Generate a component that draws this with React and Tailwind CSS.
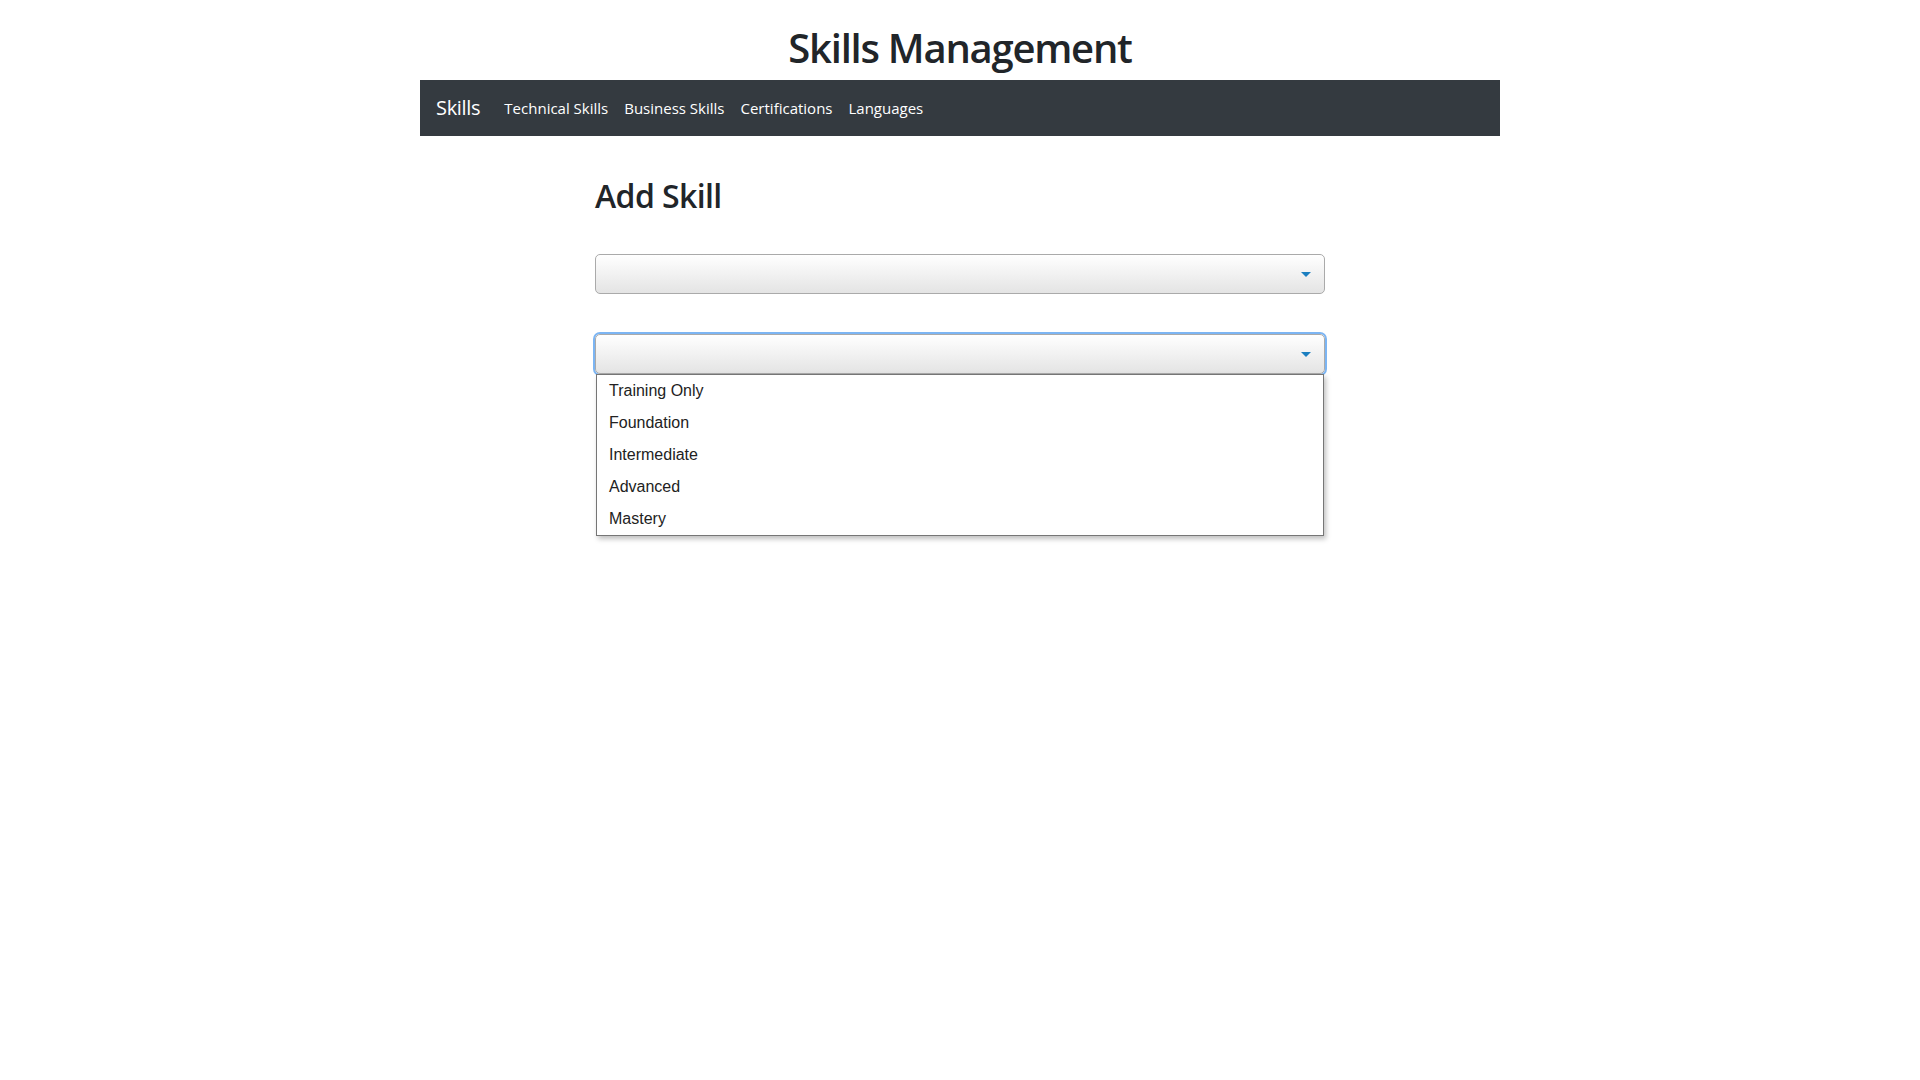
import React from 'react';

const links = ['Technical Skills', 'Business Skills', 'Certifications', 'Languages'];
const levels = ['Training Only', 'Foundation', 'Intermediate', 'Advanced', 'Mastery'];

function Arrow() {
  return (
    <svg width="10" height="5" viewBox="0 0 10 5" className="shrink-0">
      <path d="M0 0 H10 L5 5 Z" fill="#1b7fc0" />
    </svg>
  );
}

function Select({ focused, children }) {
  return (
    <div className="relative">
      <div
        className={
          'h-[40px] rounded-[5px] border border-[#aaaaaa] bg-gradient-to-b from-white to-[#e4e4e4] flex items-center justify-end pr-[13px] ' +
          (focused ? 'shadow-[0_0_0_2px_#7cb5f3]' : '')
        }
      >
        <Arrow />
      </div>
      {children}
    </div>
  );
}

export default function App() {
  return (
    <div className="min-h-screen bg-white text-[#212529] font-['Open_Sans','Noto_Sans',sans-serif]">
      <div className="w-[1080px] mx-auto">
        <h1 className="pt-6 mb-2 text-center text-[40px] leading-[48px] font-semibold tracking-[-1.25px]">Skills Management</h1>
        <nav className="h-[56px] bg-[#343a40] flex items-center px-4">
          <span className="text-white text-[20px] mr-4 tracking-[-0.3px]">Skills</span>
          {links.map(l => (
            <a key={l} className="text-white text-[15px] px-2">{l}</a>
          ))}
        </nav>
        <div className="w-[730px] mx-auto pt-[41px]">
          <h2 className="text-[32px] leading-[38px] font-semibold tracking-[-0.6px] mb-[39px]">Add Skill</h2>
          <Select />
          <div className="h-[40px]" />
          <Select focused>
            <ul className="absolute left-[1px] right-[1px] top-full z-10 bg-white border border-[#767676] shadow-[2px_3px_5px_rgba(0,0,0,0.25)] font-['Liberation_Sans',Arial,sans-serif] text-[16px] text-[#222]">
              {levels.map(lv => (
                <li key={lv} className="h-8 leading-8 px-3">{lv}</li>
              ))}
            </ul>
          </Select>
        </div>
      </div>
    </div>
  );
}
